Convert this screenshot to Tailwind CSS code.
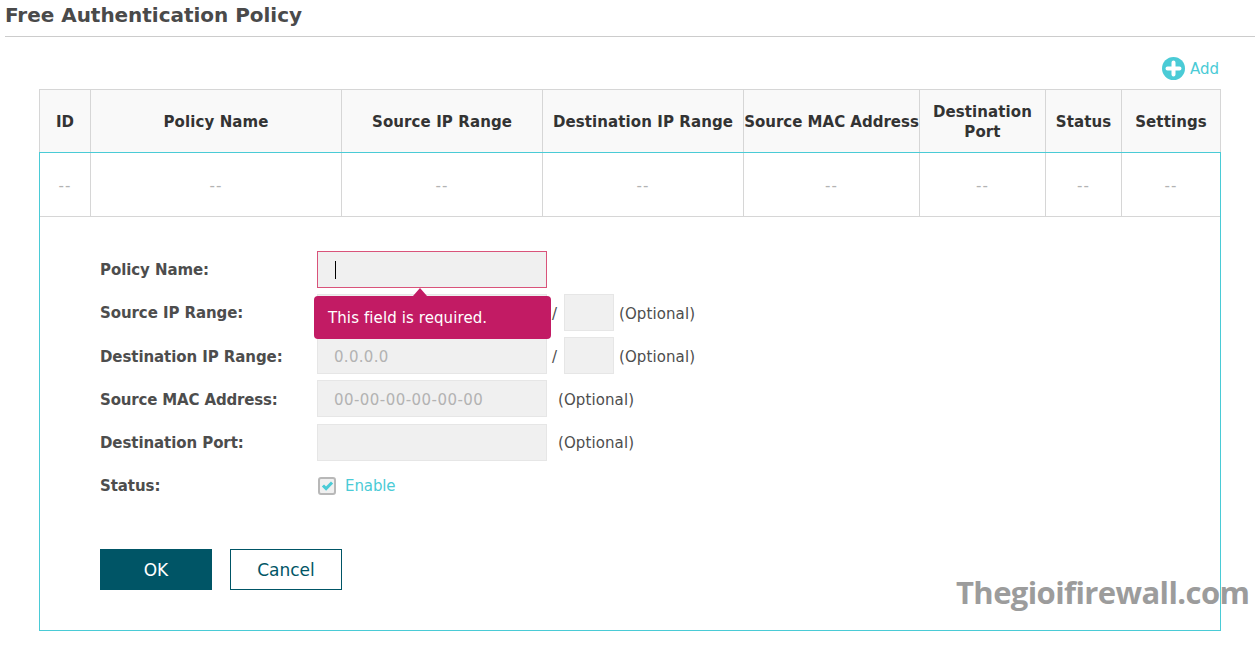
<!DOCTYPE html>
<html lang="en">
<head>
    <meta charset="UTF-8">
    <title>Free Authentication Policy</title>
    <script src="https://cdn.jsdelivr.net/npm/@tailwindcss/browser@4"></script>
</head>
<body class="bg-white font-['DejaVu_Sans',sans-serif] text-[15px] text-[#4d4d4d] h-[649px] overflow-hidden relative">

    <!-- Page title -->
    <div class="ml-[5px] mr-px h-[37px] border-b border-[#cccccc] pt-[1px]">
        <h1 class="text-[20px] leading-[28px] font-bold tracking-[-0.03px] text-[#4a4a4a]">Free Authentication Policy</h1>
    </div>

    <!-- Add -->
    <div class="h-[52px] pr-[37px] flex items-start justify-end pt-[19px]">
        <a class="flex items-center gap-[5px] text-[#4acbd6] text-[15px] leading-[24px]">
            <svg class="w-[23px] h-[23px]" viewBox="0 0 23 23">
                <circle cx="11.5" cy="11.5" r="11.5" fill="#4acbd6"/>
                <path d="M11.5 5.5v12M5.5 11.5h12" stroke="#fff" stroke-width="4" stroke-linecap="round"/>
            </svg>
            <span class="pt-px">Add</span>
        </a>
    </div>

    <div class="mx-[39px] w-[1182px]">
        <!-- Table header -->
        <div class="grid grid-cols-[51px_251px_201px_201px_176px_126px_76px_98px] h-[64px] -mb-px bg-[#f9f9f9] border-t border-l border-r border-[#d6d6d6] font-bold text-[15px] leading-[20px] tracking-[0.1px] text-[#333333] text-center">
            <div class="flex items-center justify-center border-r border-[#d6d6d6]">ID</div>
            <div class="flex items-center justify-center border-r border-[#d6d6d6]">Policy Name</div>
            <div class="flex items-center justify-center border-r border-[#d6d6d6]">Source IP Range</div>
            <div class="flex items-center justify-center border-r border-[#d6d6d6] whitespace-nowrap">Destination IP Range</div>
            <div class="flex items-center justify-center border-r border-[#d6d6d6] whitespace-nowrap tracking-normal">Source MAC Address</div>
            <div class="flex items-center justify-center border-r border-[#d6d6d6]">Destination<br>Port</div>
            <div class="flex items-center justify-center border-r border-[#d6d6d6]">Status</div>
            <div class="flex items-center justify-center">Settings</div>
        </div>

        <!-- Empty row + form, teal frame -->
        <div class="relative border border-[#4acbd6] h-[479px]">
            <div class="grid grid-cols-[51px_251px_201px_201px_176px_126px_76px_98px] h-[64px] border-b border-[#d6d6d6] text-[#b3b3b3] text-[15px] tracking-[1px] text-center">
                <div class="flex items-center justify-center border-r border-[#d6d6d6] pt-[3px]">--</div>
                <div class="flex items-center justify-center border-r border-[#d6d6d6] pt-[3px]">--</div>
                <div class="flex items-center justify-center border-r border-[#d6d6d6] pt-[3px]">--</div>
                <div class="flex items-center justify-center border-r border-[#d6d6d6] pt-[3px]">--</div>
                <div class="flex items-center justify-center border-r border-[#d6d6d6] pt-[3px]">--</div>
                <div class="flex items-center justify-center border-r border-[#d6d6d6] pt-[3px]">--</div>
                <div class="flex items-center justify-center border-r border-[#d6d6d6] pt-[3px]">--</div>
                <div class="flex items-center justify-center pt-[3px]">--</div>
            </div>

            <div class="pl-[60px] pt-[34px] flex flex-col gap-[6px] relative">
                <div class="flex items-center h-[37px]">
                    <label class="w-[217px] font-bold tracking-[-0.08px] pt-[2px]">Policy Name:</label>
                    <div class="w-[230px] h-[37px] bg-[#f0f0f0] border border-[#d9537a] pl-[17px] flex items-center">
                        <span class="w-px h-[18px] bg-black"></span>
                    </div>
                </div>
                <div class="flex items-center h-[37px]">
                    <label class="w-[217px] font-bold tracking-[-0.08px] pt-[2px]">Source IP Range:</label>
                    <div class="w-[230px] h-[37px] bg-[#f0f0f0] border border-[#e6e6e6]"></div>
                    <span class="w-[17px] pl-[5px] pt-[3px]">/</span>
                    <div class="w-[50px] h-[37px] bg-[#f0f0f0] border border-[#e6e6e6]"></div>
                    <span class="ml-[5px] pt-[3px] tracking-[0.1px]">(Optional)</span>
                </div>
                <div class="flex items-center h-[37px]">
                    <label class="w-[217px] font-bold tracking-[-0.08px] pt-[4px]">Destination IP Range:</label>
                    <div class="w-[230px] h-[37px] bg-[#f0f0f0] border border-[#e6e6e6] pl-[16px] pt-[4px] flex items-center text-[#b3b3b3] tracking-[0.3px]">0.0.0.0</div>
                    <span class="w-[17px] pl-[5px] pt-[4px]">/</span>
                    <div class="w-[50px] h-[37px] bg-[#f0f0f0] border border-[#e6e6e6]"></div>
                    <span class="ml-[5px] pt-[4px] tracking-[0.1px]">(Optional)</span>
                </div>
                <div class="flex items-center h-[37px]">
                    <label class="w-[217px] font-bold tracking-[-0.16px] pt-[4px]">Source MAC Address:</label>
                    <div class="w-[230px] h-[37px] bg-[#f0f0f0] border border-[#e6e6e6] pl-[16px] pt-[4px] flex items-center text-[#b3b3b3] tracking-[0.45px]">00-00-00-00-00-00</div>
                    <span class="ml-[11px] pt-[4px] tracking-[0.1px]">(Optional)</span>
                </div>
                <div class="flex items-center h-[37px] mt-px">
                    <label class="w-[217px] font-bold tracking-[-0.08px] pt-[2px]">Destination Port:</label>
                    <div class="w-[230px] h-[37px] bg-[#f0f0f0] border border-[#e6e6e6]"></div>
                    <span class="ml-[11px] pt-[2px] tracking-[0.1px]">(Optional)</span>
                </div>
                <div class="flex items-center h-[37px]">
                    <label class="w-[217px] font-bold tracking-[-0.08px] pt-[2px]">Status:</label>
                    <span class="ml-px w-[18px] h-[18px] bg-[#f0f0f0] border-2 border-[#b8b8b8] rounded-[3px] flex items-center justify-center">
                        <svg class="w-[13px] h-[13px]" viewBox="0 0 12 12"><path d="M1.8 6l2.9 2.9L10.2 3.2" fill="none" stroke="#4acbd6" stroke-width="2.8"/></svg>
                    </span>
                    <span class="ml-[9px] pt-[2px] text-[#4acbd6] tracking-[-0.1px]">Enable</span>
                </div>

                <div class="flex gap-[18px] mt-[39px]">
                    <button class="w-[112px] h-[41px] bg-[#005566] text-white text-[17px] pt-[2px]">OK</button>
                    <button class="w-[112px] h-[41px] bg-white border border-[#005566] text-[#005566] text-[17px] pt-[2px]">Cancel</button>
                </div>

                <!-- Validation tooltip -->
                <div class="absolute left-[274px] top-[79px] w-[237px] h-[43px] bg-[#c21b64] rounded-[4px] text-white pl-[14px] pt-[2px] flex items-center tracking-[0.1px]">
                    <span class="absolute left-[99px] top-[-8px] w-0 h-0 border-x-[7px] border-x-transparent border-b-[8px] border-b-[#c21b64]"></span>
                    This field is required.
                </div>
            </div>
        </div>
    </div>

    <!-- Watermark -->
    <div class="absolute left-[956px] top-[571px] font-['Open_Sans',sans-serif] font-bold text-[31px] leading-[42px] text-[#9c9c9c] tracking-[-0.6px]">Thegioifirewall.com</div>
</body>
</html>
